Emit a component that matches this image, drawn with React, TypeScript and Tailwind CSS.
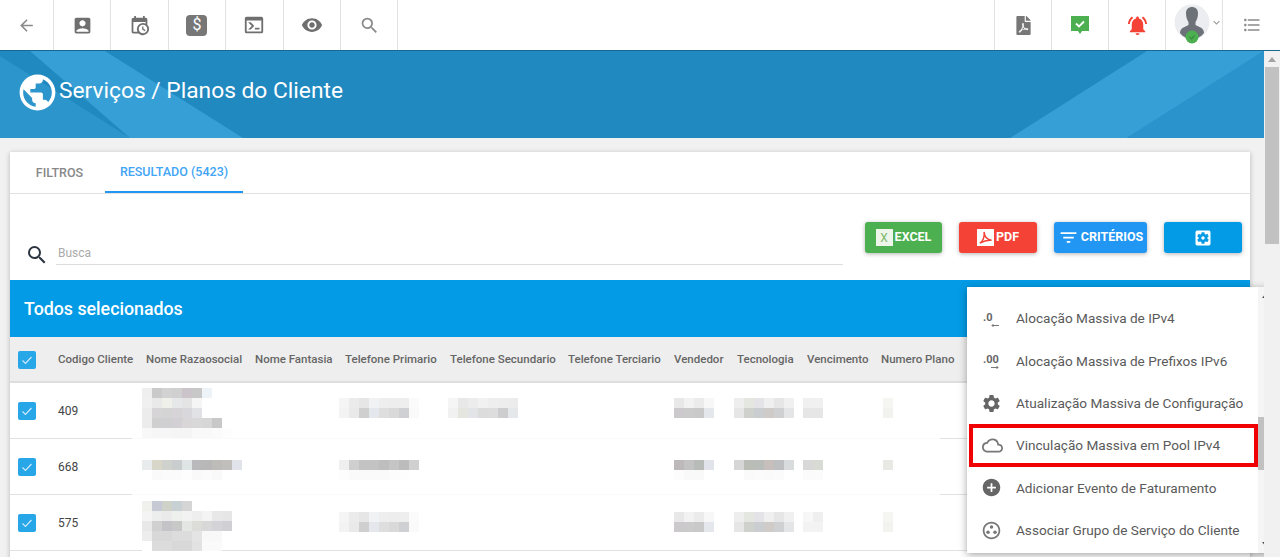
import {
  MdAccountBox,
  MdAddCircle,
  MdArrowBack,
  MdCloudQueue,
  MdFilterList,
  MdFormatListBulleted,
  MdKeyboardArrowDown,
  MdNotificationsActive,
  MdOutlineGroupWork,
  MdPublic,
  MdRemoveRedEye,
  MdSearch,
  MdSettings,
  MdSettingsApplications,
} from "react-icons/md";
import { FaFilePdf } from "react-icons/fa";
import type { ReactNode } from "react";

// Top bar
function BarCell({ children, className = "w-[57.400px] justify-center" }: { children: ReactNode; className?: string }) {
  return (
    <div className={`flex h-full items-center border-r border-[#e2e2e2] ${className}`}>
      {children}
    </div>
  );
}

function CalendarClock() {
  return (
    <svg viewBox="0 0 24 24" className="size-[21px] fill-[#6f6f6f]">
      <path d="M15,13H16.5V15.82L18.94,17.23L18.19,18.53L15,16.69V13M19,8H5V19H9.67C9.24,18.09 9,17.07 9,16A7,7 0 0,1 16,9C17.07,9 18.09,9.24 19,9.67V8M5,21C3.89,21 3,20.1 3,19V5C3,3.89 3.89,3 5,3H6V1H8V3H16V1H18V3H19A2,2 0 0,1 21,5V11.1C22.24,12.36 23,14.09 23,16A7,7 0 0,1 16,23C14.09,23 12.36,22.24 11.1,21H5M16,11.15A4.85,4.85 0 0,0 11.15,16C11.15,18.68 13.32,20.85 16,20.85A4.85,4.85 0 0,0 20.85,16C20.85,13.32 18.68,11.15 16,11.15Z" />
    </svg>
  );
}

function ConsoleIcon() {
  return (
    <svg viewBox="0 0 24 24" className="size-[22px] fill-[#6f6f6f]">
      <path d="M20,19V7H4V19H20M20,3A2,2 0 0,1 22,5V19A2,2 0 0,1 20,21H4A2,2 0 0,1 2,19V5C2,3.89 2.9,3 4,3H20M13,17V15H18V17H13M9.58,13L5.57,9H8.4L11.7,12.3C12.09,12.69 12.09,13.33 11.7,13.72L8.42,17H5.59L9.58,13Z" />
    </svg>
  );
}

function ChatCheck() {
  return (
    <svg viewBox="0 0 20 20" className="size-[20px]">
      <path d="M1 1h18v15H12l-2 3-2-3H1z" fill="#4caf50" />
      <path d="M6 8.500l3 3 5-5" fill="none" stroke="#fff" strokeWidth="1.800" />
    </svg>
  );
}

function Avatar() {
  return (
    <svg viewBox="0 0 36 40" className="h-[40px] w-[36px] shrink-0">
      <circle cx="18" cy="18" r="17.500" fill="#ecedf1" />
      <path d="M12 9c0-4 3-6 6-6s6 2 6 6c0 4-1 7-2.500 9v3l6 3c1.500 1 2.500 3 2.500 5-3 4-7.500 6-12 6s-9-2-12-6c0-2 1-4 2.500-5l6-3v-3C13 16 12 13 12 9z" fill="#6d7279" />
      <circle cx="18" cy="33" r="6.500" fill="#4caf50" />
      <path d="M15.500 33l2 2 3-3.500" fill="none" stroke="#3b8f3f" strokeWidth="1.300" />
    </svg>
  );
}

function TopBar() {
  return (
    <header className="flex h-[51px] shrink-0 items-center justify-between border-b border-[#17678f] bg-white">
      <div className="flex h-full">
        <BarCell className="w-[54px] justify-center">
          <MdArrowBack className="size-[19px] text-[#8a8a8a]" />
        </BarCell>
        <BarCell>
          <MdAccountBox className="size-[21px] text-[#6f6f6f]" />
        </BarCell>
        <BarCell>
          <CalendarClock />
        </BarCell>
        <BarCell>
          <span className="flex size-[21px] items-center justify-center rounded-[4px] bg-[#777] text-[16px] leading-none text-white">$</span>
        </BarCell>
        <BarCell>
          <ConsoleIcon />
        </BarCell>
        <BarCell>
          <MdRemoveRedEye className="size-[22px] text-[#6f6f6f]" />
        </BarCell>
        <BarCell>
          <MdSearch className="size-[21px] text-[#8a8a8a]" />
        </BarCell>
      </div>
      <div className="flex h-full border-l border-[#e2e2e2]">
        <BarCell className="w-[57px] justify-center">
          <FaFilePdf className="size-[19px] text-[#777]" />
        </BarCell>
        <BarCell className="w-[57px] justify-center">
          <ChatCheck />
        </BarCell>
        <BarCell className="w-[57px] justify-center">
          <MdNotificationsActive className="size-[23px] text-[#f44336]" />
        </BarCell>
        <BarCell className="w-[57px] items-start pt-[4px] pl-[8px]">
          <Avatar />
          <MdKeyboardArrowDown className="mt-[12px] size-[13px] shrink-0 text-[#999]" />
        </BarCell>
        <div className="flex h-full w-[57px] items-center justify-center">
          <MdFormatListBulleted className="size-[20px] text-[#8a8a8a]" />
        </div>
      </div>
    </header>
  );
}

// Banner
function Banner() {
  return (
    <div className="relative h-[87px] shrink-0 overflow-hidden bg-[#2089bf]">
      <svg viewBox="0 0 1264 87" className="absolute inset-0 h-full w-full">
        <path d="M0 5L130 87H0z" fill="#2c95cc" />
        <path d="M30 0h75l138 87H130z" fill="#359fd6" />
        <path d="M1147 0h117L1127 87H1010z" fill="#359fd6" />
        <path d="M1264 0v87H1127z" fill="#2b93cb" />
      </svg>
      <div className="relative flex h-full items-start pt-[20px] pl-[16px]">
        <MdPublic className="size-[43px] text-white" />
        <h1 className="mt-[5px] text-[22.750px] leading-[30px] text-white">Serviços / Planos do Cliente</h1>
      </div>
    </div>
  );
}

// Toolbar buttons
function ActionButton({ className, children }: { className: string; children: ReactNode }) {
  return (
    <button className={`flex h-[31px] items-center justify-center gap-[2px] rounded-[3px] text-[12.500px] font-bold text-white shadow-[0_1px_4px_rgba(0,0,0,0.3)] ${className}`}>
      {children}
    </button>
  );
}

function Toolbar() {
  return (
    <div className="flex h-[86px] items-start pt-[28px] pr-[8px]">
      <div className="mt-[19px] ml-[15px] flex w-[818px] items-start">
        <MdSearch className="mt-[2px] size-[24px] text-[#2b3440]" />
        <div className="ml-[7px] flex h-[24px] flex-1 items-center border-b border-[#ddd] pl-[2px] text-[12px] text-[#aaa]">Busca</div>
      </div>
      <div className="ml-auto flex gap-[17px]">
        <ActionButton className="w-[77px] bg-[#4caf50]">
          <span className="flex size-[17px] items-center justify-center bg-[#eef6ea] text-[12px] font-normal text-[#7cb96a]">X</span>
          EXCEL
        </ActionButton>
        <ActionButton className="w-[78px] bg-[#f44336]">
          <span className="flex size-[17px] items-center justify-center bg-white">
            <svg viewBox="0 0 16 16" className="size-[15px]">
              <path d="M2 14c3-2 5-7 4.500-12 .5 5 3 8.500 8 9-4-.5-8 .5-12.500 3z" fill="none" stroke="#f44336" strokeWidth="1.500" />
            </svg>
          </span>
          PDF
        </ActionButton>
        <ActionButton className="w-[93px] bg-[#2196f3]">
          <MdFilterList className="size-[21px]" />
          CRITÉRIOS
        </ActionButton>
        <ActionButton className="w-[78px] bg-[#039be5]">
          <MdSettingsApplications className="size-[20px]" />
        </ActionButton>
      </div>
    </div>
  );
}

// Pixelated (hidden) data
function Mosaic({ rows, className = "" }: { rows: string[][]; className?: string }) {
  return (
    <div className={`self-start ${className}`}>
      {rows.map((row, i) => (
        <div className="flex" key={i}>
          {row.map((color, j) => (
            <div className="h-[10px] w-[10px]" style={{ backgroundColor: color }} key={j} />
          ))}
        </div>
      ))}
    </div>
  );
}

function Check({ className = "" }: { className?: string }) {
  return (
    <span className={`flex size-[18px] items-center justify-center rounded-[2px] bg-[#27a6e8] ${className}`}>
      <svg viewBox="0 0 18 18" className="size-[18px]">
        <path d="M4.500 9.500l3 3 6-6.500" fill="none" stroke="#cfeafa" strokeWidth="1.200" />
      </svg>
    </span>
  );
}

const headers = [
  { label: "Codigo Cliente", width: "w-[88px]" },
  { label: "Nome Razaosocial", width: "w-[109px]" },
  { label: "Nome Fantasia", width: "w-[90px]" },
  { label: "Telefone Primario", width: "w-[105px]" },
  { label: "Telefone Secundario", width: "w-[118px]" },
  { label: "Telefone Terciario", width: "w-[106px]" },
  { label: "Vendedor", width: "w-[63px]" },
  { label: "Tecnologia", width: "w-[70px]" },
  { label: "Vencimento", width: "w-[74px]" },
  { label: "Numero Plano", width: "w-[90px]" },
];

const phoneA = [
  ["#f5f5f5", "#ebebeb", "#e6e6e6", "#f0f2f4", "#eeeeee", "#ededed", "#eeeeee", "#fbfbfb"],
  ["#f3f3f3", "#e9e9e9", "#cfcfcf", "#e4e8ec", "#dedede", "#d9d9d9", "#cfd0d3", "#fafafa"],
];
const phoneB = [
  ["#f5f5f5", "#e8e8e8", "#ececec", "#f1f1f1", "#eeeeee", "#ededed", "#ececec"],
  ["#f1f1f1", "#e6e6e0", "#e2e4e8", "#dcdcdc", "#dddddd", "#cdcdd0", "#e4e8ea"],
];
const vendorA = [
  ["#e8e8e8", "#f2f2f2", "#ebebeb", "#f7f7f7"],
  ["#cbc9cb", "#cbcbcb", "#c9c9c9", "#e4e8ec"],
];
const techA = [
  ["#eeeeee", "#e4e6e0", "#e4e4e8", "#efefef", "#e6e6e6", "#f0f0f0"],
  ["#e6e6e6", "#cfd2cc", "#cbced0", "#cfcbc9", "#ced0d2", "#e3e5e6"],
];
const dayA = [["#f0f0f0", "#f0f0f0"], ["#e6e6e6", "#e6e6e6"]];
const numA = [["#f5f5f2"], ["#f2f2ee"]];

const rows = [
  {
    code: "409",
    divider: true,
    name: {
      top: "mt-[5px]",
      rows: [
        ["#efefef", "#cacaca", "#d2d2d2", "#d0d0d0", "#cbc4ca", "#c8c8c8", "#eef3f7"],
        ["#f0f0f0", "#e9e9e9", "#f0f0ea", "#e5e7e8", "#e4e4e4", "#f5f5f5"],
        ["#ececec", "#d6d4d6", "#d4d4d4", "#d6d4d6", "#d8d8dc", "#e0e2e6"],
        ["#ececec", "#cfcfcf", "#d0cfd1", "#d2d0d4", "#d8d6d6", "#d8d8d8", "#d6d6d6", "#c8c8c8"],
        ["#f8f8f8", "#f6f6f6", "#f6f6f6", "#f5f5f5", "#f5f5f5", "#f9f9f9", "#f9f9f9", "#fbfbfb", "#fdfdfd"],
      ],
    },
    phone1: phoneA,
    phone2: phoneB,
    vendor: vendorA,
    tech: techA,
    day: dayA,
    num: numA,
    cellTop: "mt-[15px]",
  },
  {
    code: "668",
    divider: true,
    name: {
      top: "mt-[21px]",
      rows: [
        ["#e8ecec", "#d8d6c8", "#cfd2cc", "#c9cdcd", "#dfe4e4", "#b9b9bb", "#b8b8b8", "#bdbcb8", "#c0bfbb", "#e0e3ea"],
        ["#ffffff", "#fafafa", "#fbfbfb", "#fbfbfb", "#fdfdfd", "#f9f9f9", "#fbfbfb", "#f9f9f9", "#ffffff", "#ffffff"],
      ],
    },
    phone1: [
      ["#efefef", "#cfcfcf", "#c3c3c3", "#c3c3c3", "#bebebe", "#c5c5c5", "#bcbcbc", "#d0d0d0"],
      ["#fdfdfd", "#fafafa", "#fafafa", "#fafafa", "#fafafa", "#fcfcfc", "#fdfdfd", "#ffffff"],
    ],
    phone2: [],
    vendor: [
      ["#bdb9bb", "#c3c3c3", "#b8bcb8", "#e0e3ea"],
      ["#fcfcfc", "#f9f9f9", "#f9f9f9", "#ffffff"],
    ],
    tech: [
      ["#d6d6d6", "#b9bdb6", "#b9bdba", "#c7bfbc", "#bdbfc0", "#d9dcdd"],
      ["#ffffff", "#fafafa", "#fbfbfb", "#fafafa", "#fbfbfb", "#ffffff"],
    ],
    day: [["#d8d8d8", "#d8dad4"], ["#fbfbfb", "#fbfbfb"]],
    num: [["#e8e8e4"]],
    cellTop: "mt-[21px]",
  },
  {
    code: "575",
    divider: false,
    name: {
      top: "mt-[6px]",
      rows: [
        ["#f0f0ec", "#c5cad4", "#cfd2c8", "#c7d0d2", "#d5d5d5"],
        ["#f4f4f4", "#eceeee", "#eaeaea", "#eef0ee", "#f2f2f2", "#eeeeee", "#f4f4f4", "#e8e8e8", "#e6e6e6"],
        ["#e8e8e8", "#d0d0d0", "#c4c4c8", "#c8c8c8", "#e4e6e4", "#dcdcd8", "#d8d8d8", "#d4d4d8", "#d0d0d4"],
        ["#ededed", "#d8d8d8", "#d8d8d8", "#dcdcdc", "#dcdcdc", "#e4e4e4", "#f8f8f8", "#f8f8f8"],
        ["#ffffff", "#dcdcdc", "#dcdcdc", "#d8d8d8", "#d8d8d8", "#e2e2e2", "#fafafa", "#fafafa"],
      ],
    },
    phone1: phoneA,
    phone2: [],
    vendor: vendorA,
    tech: techA,
    day: [["#f7f7f7", "#efefef"], ["#f3f3f3", "#f3f3f3"]],
    num: numA,
    cellTop: "mt-[17px]",
  },
];

function ResultTable() {
  return (
    <div className="pb-[20px]">
      <div className="flex h-[46px] items-center border-b-2 border-[#dedede] bg-[#eeeeee] pt-px text-[11.500px] font-medium whitespace-nowrap text-[#666]">
        <div className="w-[48px] pl-[8px]">
          <Check />
        </div>
        {headers.map((h) => (
          <div className={h.width} key={h.label}>
            {h.label}
          </div>
        ))}
      </div>
      {rows.map((row) => (
        <div key={row.code}>
          <div className="grid h-[55px] grid-cols-[48px_84px_197px_109px_226px_60px_69px_80px_1fr] items-center text-[12px] text-[#444]">
            <div className="pl-[8px]">
              <Check />
            </div>
            <div>{row.code}</div>
            <Mosaic rows={row.name.rows} className={row.name.top} />
            <Mosaic rows={row.phone1} className={row.cellTop} />
            <Mosaic rows={row.phone2} className={row.cellTop} />
            <Mosaic rows={row.vendor} className={row.cellTop} />
            <Mosaic rows={row.tech} className={row.cellTop} />
            <Mosaic rows={row.day} className={row.cellTop} />
            <Mosaic rows={row.num} className={row.cellTop} />
          </div>
          {row.divider ? (
            <div className="flex h-px bg-[#fbfbfb]">
              <div className="w-[122px] bg-[#e2e2e2]" />
              <div className="ml-auto w-[310px] bg-[#e2e2e2]" />
            </div>
          ) : (
            <div className="h-px bg-[#e2e2e2]" />
          )}
        </div>
      ))}
    </div>
  );
}

// Context menu over the blue bar
function DecimalIcon({ label, arrow }: { label: string; arrow: string }) {
  return (
    <span className="relative flex h-[24px] w-[24px] items-center pl-px">
      <span className="-mt-[2px] text-[11px] leading-none font-bold text-[#666]">{label}</span>
      <svg viewBox="0 0 10 5" className="absolute right-[6px] bottom-[3px] h-[5px] w-[10px]">
        <path d={arrow} fill="none" stroke="#777" strokeWidth="1" />
      </svg>
    </span>
  );
}

function MassMenu() {
  const items: { icon: ReactNode; label: string; selected?: boolean }[] = [
    { icon: <DecimalIcon label=".0" arrow="M9 2.500H2M3.500 1L2 2.500 3.500 4" />, label: "Alocação Massiva de IPv4" },
    { icon: <DecimalIcon label=".00" arrow="M1 2.500h7M6.500 1L8 2.500 6.500 4" />, label: "Alocação Massiva de Prefixos IPv6" },
    { icon: <MdSettings className="-ml-px size-[21px] text-[#666]" />, label: "Atualização Massiva de Configuração" },
    { icon: <MdCloudQueue className="size-[21px] text-[#777]" />, label: "Vinculação Massiva em Pool IPv4", selected: true },
    { icon: <MdAddCircle className="-ml-px size-[21px] text-[#666]" />, label: "Adicionar Evento de Faturamento" },
    { icon: <MdOutlineGroupWork className="-ml-px size-[21px] text-[#777]" />, label: "Associar Grupo de Serviço do Cliente" },
  ];

  return (
    <div className="absolute top-[236px] left-[967px] flex h-[266px] w-[307px] bg-white shadow-[0_2px_8px_rgba(0,0,0,0.35)]">
      <ul className="flex-1 pt-[10.500px] pl-[2px]">
        {items.map((item) => (
          <li
            className={`flex h-[42.300px] items-center text-[13.600px] whitespace-nowrap text-[#5a5a5a] ${item.selected ? "border-4 border-[#f00000] pl-[9px]" : "pl-[13px]"}`}
            key={item.label}
          >
            <span className="flex w-[34px] shrink-0 justify-start">{item.icon}</span>
            {item.label}
          </li>
        ))}
      </ul>
      <div className="relative w-[16px] shrink-0 bg-[#f5f5f5]">
        <span className="absolute top-[6px] left-[4px] border-x-[4px] border-b-[5px] border-x-transparent border-b-[#505050]" />
        <div className="absolute top-[130px] left-0 h-[53px] w-[16px] bg-[#c1c1c1]" />
        <span className="absolute bottom-[6px] left-[4px] border-x-[4px] border-t-[5px] border-x-transparent border-t-[#505050]" />
      </div>
    </div>
  );
}

export default function App() {
  return (
    <div className="flex h-[557px] flex-col overflow-hidden bg-[#f1f1f1] font-['Roboto',sans-serif]">
      <TopBar />
      <div className="flex min-h-0 flex-1">
        <main className="relative min-w-0 flex-1">
          <Banner />
          <section className="mt-[14px] mr-[14px] ml-[10px] bg-white shadow-[0_1px_5px_rgba(0,0,0,0.25)]">
            <div className="flex h-[42px] border-b border-[#e2e2e2] pt-px text-[12.500px] font-medium">
              <div className="flex w-[95px] items-center justify-center pl-[4px] text-[#888]">FILTROS</div>
              <div className="flex w-[138px] items-center justify-center border-b-2 border-[#2196f3] text-[#42a5f5]">RESULTADO (5423)</div>
            </div>
            <Toolbar />
            <div className="flex h-[57px] items-center bg-[#039be5] pt-px pl-[14px] text-[17.800px] font-medium text-white">Todos selecionados</div>
            <ResultTable />
          </section>
          <MassMenu />
        </main>
        <aside className="relative w-[16px] shrink-0 bg-[#f1f1f1]">
          <span className="absolute top-[6px] left-[4px] border-x-[4px] border-b-[5px] border-x-transparent border-b-[#a3a3a3]" />
          <div className="absolute top-[16px] left-[1px] h-[177px] w-[14px] bg-[#c1c1c1]" />
        </aside>
      </div>
    </div>
  );
}
